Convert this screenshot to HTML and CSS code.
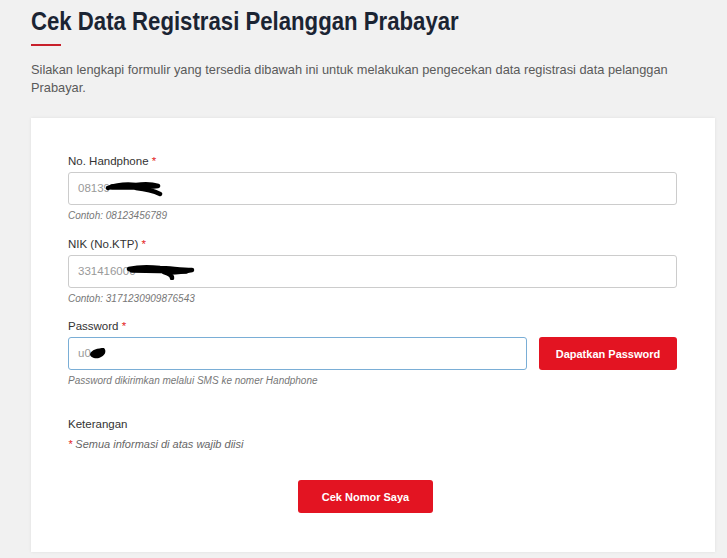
FILE: index.html
```html
<!DOCTYPE html>
<html lang="id">
<head>
<meta charset="utf-8">
<title>Cek Data Registrasi Pelanggan Prabayar</title>
<link rel="stylesheet" href="styles.css">
</head>
<body>
<div class="page">
  <h1 class="title"><span class="title-text">Cek Data Registrasi Pelanggan Prabayar</span></h1>
  <div class="title-bar"></div>
  <p class="intro">Silakan lengkapi formulir yang tersedia dibawah ini untuk melakukan pengecekan data registrasi data pelanggan Prabayar.</p>

  <div class="card">
    <div class="field">
      <label class="label">No. Handphone <span class="req">*</span></label>
      <div class="input-wrap">
        <div class="input">08139</div>
        <svg class="scribble s1" width="60" height="16" viewBox="0 0 60 16"><path d="M2 7 C10 4 20 3 30 4 C38 3 46 3 52 5 C44 6 36 6 30 7 C40 8 48 10 54 13" fill="none" stroke="#000" stroke-width="4.5" stroke-linecap="round" stroke-linejoin="round"/><path d="M6 6 L40 6" stroke="#000" stroke-width="5.5" stroke-linecap="round"/></svg>
      </div>
      <div class="help">Contoh: 08123456789</div>
    </div>
    <div class="field">
      <label class="label">NIK (No.KTP) <span class="req">*</span></label>
      <div class="input-wrap">
        <div class="input">331416000</div>
        <svg class="scribble s2" width="72" height="16" viewBox="0 0 72 16"><path d="M3 5 C12 3 24 3 34 4 C44 4 54 6 66 6 C56 8 46 9 38 8 C44 10 46 12 46 14" fill="none" stroke="#000" stroke-width="4.5" stroke-linecap="round" stroke-linejoin="round"/><path d="M6 6 L60 7" stroke="#000" stroke-width="5.5" stroke-linecap="round"/></svg>
      </div>
      <div class="help">Contoh: 3171230909876543</div>
    </div>
    <div class="field">
      <label class="label">Password <span class="req">*</span></label>
      <div class="row">
        <div class="input-wrap grow">
          <div class="input focus">u0</div>
          <svg class="scribble s3" width="20" height="14" viewBox="0 0 20 14"><path d="M2 8 C3 4 10 2 16 2 C19 5 17 10 11 12 C6 13 2 11 2 8 Z" fill="#000"/></svg>
        </div>
        <button class="btn btn-side">Dapatkan Password</button>
      </div>
      <div class="help">Password dikirimkan melalui SMS ke nomer Handphone</div>
    </div>

    <div class="note">
      <div class="note-title">Keterangan</div>
      <div class="note-text"><span class="req">*</span> Semua informasi di atas wajib diisi</div>
    </div>

    <div class="submit-row">
      <button class="btn btn-submit">Cek Nomor Saya</button>
    </div>
  </div>
</div>
</body>
</html>
```

FILE: styles.css
```css
* { box-sizing: border-box; }
html, body { margin: 0; padding: 0; }
body {
  background: #f1f1f1;
  font-family: "Liberation Sans", Arial, sans-serif;
  color: #333;
  width: 727px;
  height: 558px;
  overflow: hidden;
}
.page {
  padding: 4px 12px 0 31px;
}
.title {
  margin: 0;
  font-family: "Liberation Sans", Arial, sans-serif;
  font-weight: bold;
  font-size: 25px;
  line-height: 34px;
  color: #1b2433;
  white-space: nowrap;
}
.title-text {
  display: inline-block;
  transform: scaleX(0.887);
  transform-origin: left center;
}
.title-bar {
  width: 30px;
  height: 2px;
  background: #c8202b;
  margin-top: 6px;
}
.intro {
  margin: 15px 0 0 0;
  font-size: 12.8px;
  line-height: 18px;
  color: #5a5a5a;
  max-width: 650px;
}
.card {
  margin-top: 21px;
  background: #fff;
  width: 684px;
  height: 434px;
  padding: 36px 38px 0 37px;
  box-shadow: 0 0 3px rgba(0,0,0,0.08);
}
.field { margin-bottom: 14.5px; }
.label {
  display: block;
  font-size: 11.5px;
  line-height: 14px;
  color: #333;
  margin-bottom: 4px;
}
.req { color: #e31b23; }
.input-wrap { position: relative; }
.input {
  height: 33px;
  border: 1px solid #ccc;
  border-radius: 3px;
  padding: 0 9px;
  font-size: 11.5px;
  line-height: 31px;
  color: #999;
  background: #fff;
}
.input.focus { border-color: #7aaed6; }
.scribble { position: absolute; }
.s1 { left: 38px; top: 9px; }
.s2 { left: 58px; top: 9px; }
.s3 { left: 20px; top: 9px; }
.help {
  font-size: 10px;
  font-style: italic;
  color: #777;
  margin-top: 5px;
  line-height: 12px;
}
.row { display: flex; gap: 12px; }
.grow { flex: 1; }
.btn {
  background: #e31422;
  color: #fff;
  border: none;
  border-radius: 3px;
  font-family: "Liberation Sans", Arial, sans-serif;
  font-weight: bold;
  font-size: 11px;
  height: 33px;
  cursor: pointer;
}
.btn-side { width: 138px; }
.note { margin-top: 30px; }
.note-title { font-size: 11.5px; color: #333; line-height: 14px; }
.note-text {
  margin-top: 6px;
  font-size: 11px;
  font-style: italic;
  color: #666;
  line-height: 14px;
}
.submit-row { margin-top: 29px; padding-left: 230px; }
.btn-submit { width: 135px; }
```
